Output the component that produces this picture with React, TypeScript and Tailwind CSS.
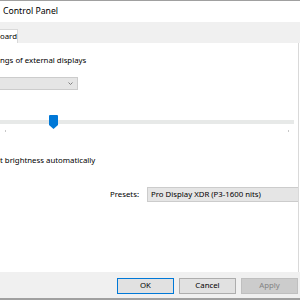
import React from 'react'

const font = { fontFamily: '"Noto Sans", "DejaVu Sans", sans-serif' }

const Button = ({
  label,
  variant = 'normal',
}: {
  label: string
  variant?: 'default' | 'normal' | 'disabled'
}) => {
  const styles = {
    default: 'border-[#0078d7] bg-[#e1e1e1] text-black',
    normal: 'border-[#adadad] bg-[#e1e1e1] text-black',
    disabled: 'border-[#bfbfbf] bg-[#cccccc] text-[#838383]',
  }[variant]
  return (
    <div
      className={`flex h-[16px] w-[57px] items-center justify-center border text-[7.8px] leading-none ${styles}`}
    >
      {label}
    </div>
  )
}

export default function App() {
  return (
    <div
      className="flex h-[300px] w-[300px] flex-col overflow-hidden bg-white text-black"
      style={font}
    >
      {/* Title */}
      <div className="h-[1px] bg-[#a0a0a0]" />
      <div className="flex h-[21px] items-center pl-[3px] text-[8.7px] leading-none">
        Control Panel
      </div>

      {/* Tabs */}
      <div className="flex h-[21px] items-end bg-[#f0f0f0]">
        <div className="flex h-[14px] w-[18px] items-center border-r border-t border-[#d9d9d9] bg-white text-[7.8px] leading-none">
          oard
        </div>
      </div>

      {/* Panel */}
      <div className="flex h-[229px] w-[299px] flex-col border-r border-[#d9d9d9] bg-white">
        <div className="mt-[12px] h-[10px] text-[7.8px] leading-[10px]">
          ngs of external displays
        </div>

        <div className="mt-[12px] flex h-[13px] w-[78px] items-center justify-end border border-l-0 border-[#cccccc] bg-[#e5e5e5] pr-[4px]">
          <svg width="5" height="3" viewBox="0 0 5 3">
            <path d="M0.5 0.5 L2.5 2.5 L4.5 0.5" fill="none" stroke="#808080" strokeWidth="1" />
          </svg>
        </div>

        {/* Slider */}
        <div className="relative mt-[25px] h-[15px] w-[294px]">
          <div className="mt-[5px] h-[4px] w-full bg-[#e7e9e8]" />
          <svg className="absolute left-[49px] top-0" width="9" height="14" viewBox="0 0 9 14">
            <path d="M1 0 H8 Q9 0 9 1 V10 L4.5 14 L0 10 V1 Q0 0 1 0 Z" fill="#0078d7" />
          </svg>
        </div>
        <div className="flex h-[2px] w-[294px] justify-between px-[5px]">
          <div className="w-[1px] bg-[#c8c8c8]" />
          <div className="w-[1px] bg-[#c8c8c8]" />
        </div>

        <div className="mt-[23px] h-[10px] text-[7.8px] leading-[10px]">
          t brightness automatically
        </div>

        <div className="mt-[22px] flex items-center">
          <div className="w-[139px] text-right text-[7.8px] leading-none">Presets:</div>
          <div className="ml-[8px] flex h-[15px] flex-1 items-center border border-r-0 border-[#cccccc] bg-[#e5e5e5] pl-[3px] text-[7.8px] leading-none">
            Pro Display XDR (P3-1600 nits)
          </div>
        </div>
      </div>

      {/* Buttons */}
      <div className="flex h-[26px] items-start justify-end gap-[5px] bg-[#f0f0f0] pr-[2px] pt-[6px]">
        <Button label="OK" variant="default" />
        <Button label="Cancel" />
        <Button label="Apply" variant="disabled" />
      </div>
      <div className="h-[2px] bg-[#a0a0a0]" />
    </div>
  )
}
